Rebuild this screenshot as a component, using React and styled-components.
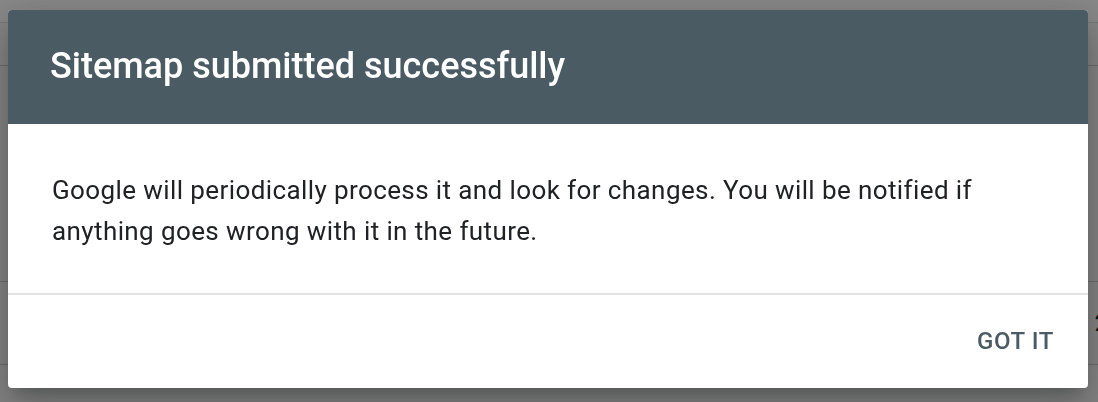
import React from "react";
import styled, { createGlobalStyle } from "styled-components";

const Global = createGlobalStyle`
  html, body { margin: 0; padding: 0; }
  body {
    width: 1098px;
    height: 402px;
    overflow: hidden;
    font-family: Roboto, "Noto Sans", Arial, sans-serif;
    background: #f1f3f4;
  }
`;

const Page = styled.div`
  width: 1098px;
  height: 402px;
  background: #f8f9fa;
  display: flex;
  flex-direction: column;
`;

const TopBar = styled.div`
  height: 22px;
  background: #ffffff;
  border-bottom: 1px solid #dadce0;
`;

const Row = styled.div`
  height: ${(p) => p.$h}px;
  border-bottom: 1px solid #c9cccf;
  display: flex;
  align-items: center;
  justify-content: flex-end;
  font-size: 24px;
  color: #202124;
  white-space: nowrap;
`;

const RowValue = styled.span`
  margin-right: -10px;
`;

const Backdrop = styled.div`
  position: fixed;
  inset: 0;
  background: rgba(0, 0, 0, 0.47);
  display: flex;
  align-items: flex-start;
  padding: 10px 10px 0 8px;
`;

const Dialog = styled.div`
  width: 1080px;
  height: 378px;
  background: #ffffff;
  border-radius: 4px;
  overflow: hidden;
  display: flex;
  flex-direction: column;
  box-shadow: 0 11px 15px -7px rgba(0, 0, 0, 0.2),
    0 24px 38px 3px rgba(0, 0, 0, 0.14), 0 9px 46px 8px rgba(0, 0, 0, 0.12);
`;

const Header = styled.div`
  height: 114px;
  box-sizing: border-box;
  flex: none;
  background: #4a5b64;
  display: flex;
  align-items: center;
  padding: 0 42px 2px 42px;
`;

const Title = styled.h2`
  margin: 0;
  font-size: 36px;
  font-weight: 500;
  color: #ffffff;
  letter-spacing: 0;
`;

const Body = styled.div`
  height: 171px;
  flex: none;
  box-sizing: border-box;
  padding: 46px 60px 0 44px;
  border-bottom: 2px solid #e3e3e3;
  font-size: 26px;
  letter-spacing: 0.4px;
  line-height: 41px;
  color: #202124;
`;

const Footer = styled.div`
  flex: 1;
  display: flex;
  align-items: center;
  justify-content: flex-end;
  padding: 0 22px 0 0;
`;

const Button = styled.button`
  border: none;
  background: transparent;
  font-family: Roboto, "Noto Sans", Arial, sans-serif;
  font-size: 24px;
  font-weight: 500;
  letter-spacing: 0.6px;
  color: #4a5b64;
  padding: 8px 12px;
  cursor: pointer;
  margin-bottom: 2px;
`;

export default function App() {
  return (
    <>
      <Global />
      <Page>
        <TopBar />
        <Row $h={42} />
        <Row $h={215} />
        <Row $h={82}>
          <RowValue>2</RowValue>
        </Row>
      </Page>
      <Backdrop>
        <Dialog role="dialog">
          <Header>
            <Title>Sitemap submitted successfully</Title>
          </Header>
          <Body>
            Google will periodically process it and look for changes. You will be notified if anything goes wrong with it in the future.
          </Body>
          <Footer>
            <Button>GOT IT</Button>
          </Footer>
        </Dialog>
      </Backdrop>
    </>
  );
}
